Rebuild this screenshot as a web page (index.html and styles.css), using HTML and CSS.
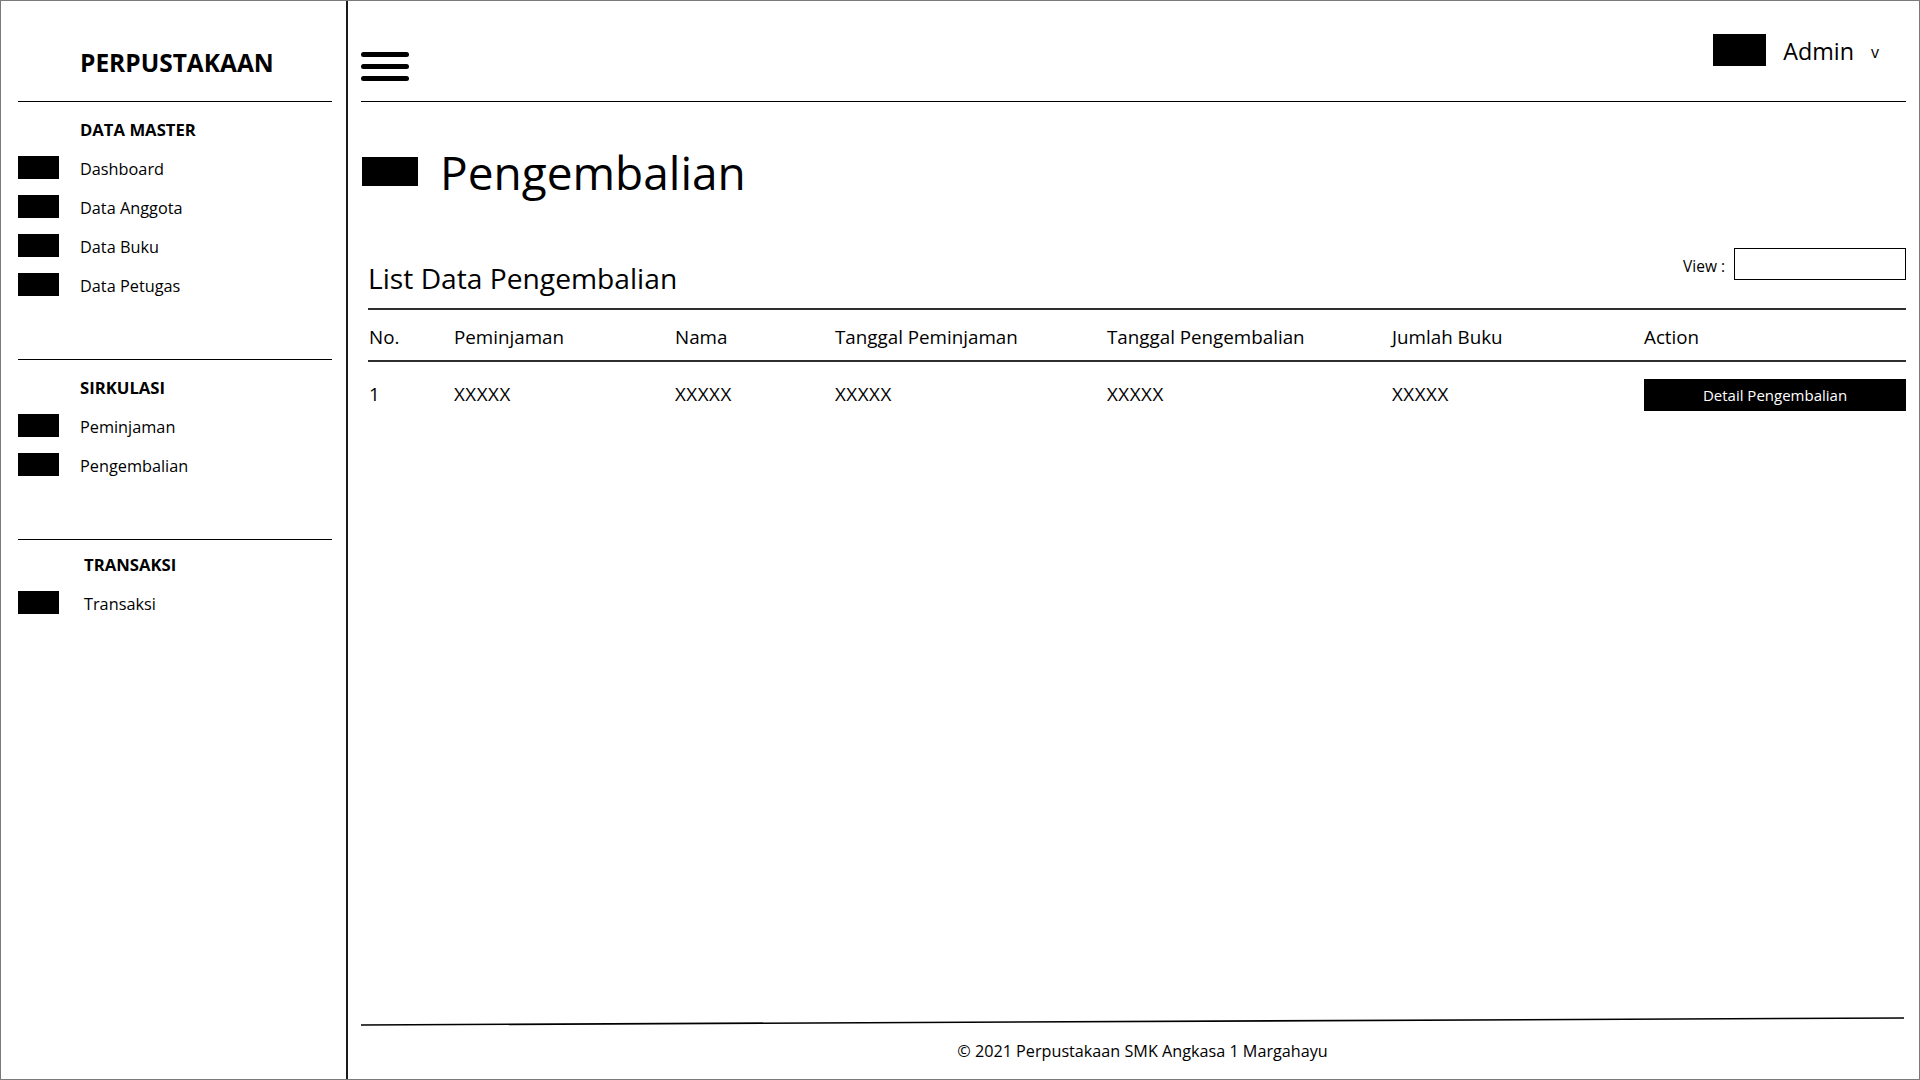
FILE: index.html
```html
<!DOCTYPE html>
<html lang="id">
<head>
<meta charset="utf-8">
<title>Perpustakaan - Pengembalian</title>
<link rel="stylesheet" href="styles.css">
</head>
<body>
<div class="frame">
  <aside class="sidebar">
    <div class="brand">PERPUSTAKAAN</div>
    <section class="nav-section">
      <div class="nav-heading">DATA MASTER</div>
      <ul class="nav-list">
        <li class="nav-item"><span class="nav-icon"></span><span class="nav-label">Dashboard</span></li>
        <li class="nav-item"><span class="nav-icon"></span><span class="nav-label">Data Anggota</span></li>
        <li class="nav-item"><span class="nav-icon"></span><span class="nav-label">Data Buku</span></li>
        <li class="nav-item"><span class="nav-icon"></span><span class="nav-label">Data Petugas</span></li>
      </ul>
    </section>
    <section class="nav-section">
      <div class="nav-heading">SIRKULASI</div>
      <ul class="nav-list">
        <li class="nav-item"><span class="nav-icon"></span><span class="nav-label">Peminjaman</span></li>
        <li class="nav-item"><span class="nav-icon"></span><span class="nav-label">Pengembalian</span></li>
      </ul>
    </section>
    <section class="nav-section nav-section-last">
      <div class="nav-heading">TRANSAKSI</div>
      <ul class="nav-list">
        <li class="nav-item"><span class="nav-icon"></span><span class="nav-label">Transaksi</span></li>
      </ul>
    </section>
  </aside>

  <main class="main">
    <header class="topbar">
      <div class="hamburger"><span></span><span></span><span></span></div>
      <div class="user">
        <span class="user-avatar"></span>
        <span class="user-name">Admin</span>
        <span class="user-caret">v</span>
      </div>
    </header>

    <div class="page-title">
      <span class="title-icon"></span>
      <h1>Pengembalian</h1>
    </div>

    <section class="list">
      <div class="list-head">
        <h2>List Data Pengembalian</h2>
        <div class="view">
          <span class="view-label">View :</span>
          <span class="view-input"></span>
        </div>
      </div>
      <div class="table">
        <div class="row row-head">
          <div class="cell cell-no">No.</div>
          <div class="cell">Peminjaman</div>
          <div class="cell">Nama</div>
          <div class="cell">Tanggal Peminjaman</div>
          <div class="cell">Tanggal Pengembalian</div>
          <div class="cell">Jumlah Buku</div>
          <div class="cell">Action</div>
        </div>
        <div class="row row-body">
          <div class="cell cell-no">1</div>
          <div class="cell">XXXXX</div>
          <div class="cell">XXXXX</div>
          <div class="cell">XXXXX</div>
          <div class="cell">XXXXX</div>
          <div class="cell">XXXXX</div>
          <div class="cell"><span class="btn">Detail Pengembalian</span></div>
        </div>
      </div>
    </section>

    <div class="spacer"></div>

    <footer class="footer">
      <svg class="footer-line" width="1544" height="12" viewBox="0 0 1544 12" preserveAspectRatio="none">
        <line x1="0" y1="10" x2="1543" y2="3" stroke="#000" stroke-width="1.6"/>
      </svg>
      <p class="footer-text">© 2021 Perpustakaan SMK Angkasa 1 Margahayu</p>
    </footer>
  </main>
</div>
</body>
</html>
```

FILE: styles.css
```css
* { box-sizing: border-box; }

html, body {
  margin: 0;
  padding: 0;
  background: #fff;
}

body {
  font-family: "Open Sans", "Noto Sans", "Liberation Sans", sans-serif;
  color: #000;
}

.frame {
  width: 1920px;
  height: 1080px;
  border: 1px solid #7a7a7a;
  display: flex;
  overflow: hidden;
}

/* Sidebar */
.sidebar {
  width: 347px;
  flex: none;
  border-right: 2px solid #1a1a1a;
  padding: 0 14px 0 17px;
  display: flex;
  flex-direction: column;
}

.brand {
  height: 100px;
  padding: 47px 0 0 62px;
  font-size: 24.5px;
  line-height: 30px;
  font-weight: 700;
}

.nav-section {
  border-top: 1px solid #000;
  padding: 16px 0 55px;
}

.nav-section-last {
  padding-top: 13px;
}

.nav-heading {
  padding-left: 62px;
  font-size: 16.7px;
  line-height: 24px;
  font-weight: 700;
  margin-bottom: 6px;
}

.nav-section-last .nav-heading,
.nav-section-last .nav-label {
  margin-left: 4px;
}

.nav-list {
  list-style: none;
  margin: 0;
  padding: 0;
}

.nav-item {
  height: 39px;
  display: flex;
  align-items: center;
  gap: 21px;
}

.nav-icon {
  width: 41px;
  height: 23px;
  background: #000;
  flex: none;
}

.nav-label {
  font-size: 16.3px;
  line-height: 24px;
  padding-top: 3px;
}

/* Main */
.main {
  flex: 1;
  display: flex;
  flex-direction: column;
  padding: 0 14px 0 13px;
}

.topbar {
  height: 101px;
  border-bottom: 1px solid #000;
  display: flex;
  justify-content: space-between;
  align-items: flex-start;
  flex: none;
}

.hamburger {
  width: 48px;
  margin-top: 51px;
  display: flex;
  flex-direction: column;
  gap: 7px;
}

.hamburger span {
  display: block;
  height: 5px;
  background: #000;
  border-radius: 3px;
}

.user {
  margin-top: 33px;
  padding-right: 27px;
  display: flex;
  align-items: center;
  height: 32px;
}

.user-avatar {
  width: 53px;
  height: 32px;
  background: #000;
  margin-right: 17px;
}

.user-name {
  font-size: 23.3px;
  line-height: 30px;
  margin-right: 17px;
  padding-top: 2px;
}

.user-caret {
  font-size: 16px;
  line-height: 20px;
  margin-top: 3px;
}

.page-title {
  display: flex;
  align-items: center;
  gap: 22px;
  margin: 41px 0 0 1px;
  height: 57px;
  flex: none;
}

.title-icon {
  width: 56px;
  height: 29px;
  background: #000;
  flex: none;
}

.page-title h1 {
  margin: 0;
  font-size: 46px;
  line-height: 56px;
  font-weight: 400;
}

/* List */
.list {
  margin: 48px 0 0 7px;
  flex: none;
}

.list-head {
  display: flex;
  justify-content: space-between;
  align-items: flex-start;
}

.list-head h2 {
  margin: 12px 0 0 0;
  font-size: 28.2px;
  line-height: 36px;
  font-weight: 400;
}

.view {
  display: flex;
  align-items: flex-end;
  gap: 9px;
}

.view-label {
  font-size: 15.5px;
  line-height: 20px;
  padding-bottom: 4px;
}

.view-input {
  width: 172px;
  height: 32px;
  border: 1px solid #000;
}

.table {
  margin-top: 12px;
  border-top: 2px solid #2e2e2e;
}

.row {
  display: grid;
  grid-template-columns: 86px 221px 160px 272px 285px 252px 1fr;
  align-items: center;
}

.row-head {
  height: 52px;
  padding-top: 4px;
  border-bottom: 2px solid #2e2e2e;
}

.row-body {
  padding-top: 14px;
  height: 50px;
}

.cell {
  font-size: 18.8px;
  line-height: 26px;
  white-space: nowrap;
}

.row-body .cell {
  letter-spacing: 0.5px;
}

.cell-no {
  padding-left: 1px;
}

.btn {
  display: flex;
  align-items: center;
  justify-content: center;
  width: 262px;
  height: 32px;
  background: #000;
  color: #fff;
  font-size: 15px;
  letter-spacing: 0;
  margin-top: 1px;
}

/* Footer */
.spacer {
  flex: 1;
}

.footer {
  flex: none;
  padding-bottom: 16px;
  text-align: center;
}

.footer-line {
  display: block;
  width: 1544px;
  height: 12px;
}

.footer-text {
  margin: 12px 0 0 0;
  font-size: 16.2px;
  line-height: 24px;
  padding-left: 18px;
}
```
